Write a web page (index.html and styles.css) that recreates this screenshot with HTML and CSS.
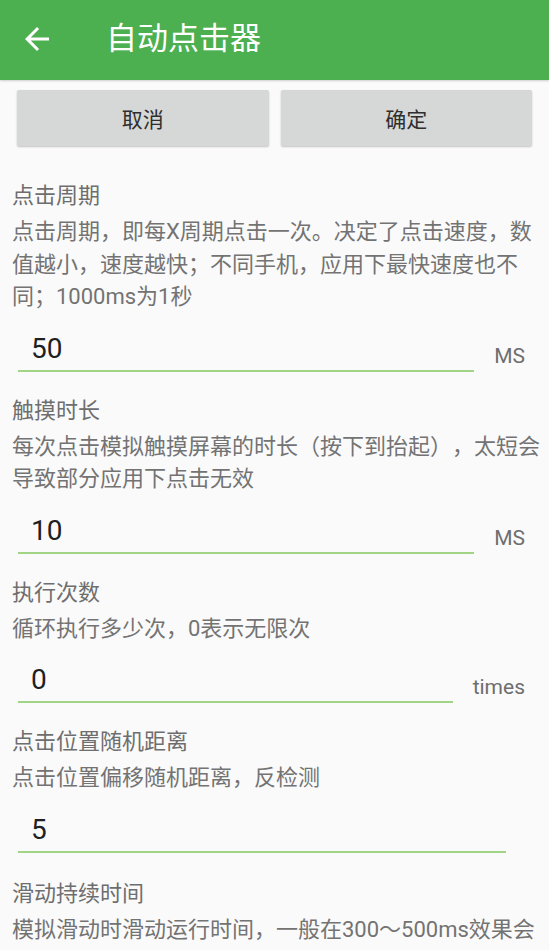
FILE: index.html
```html
<!DOCTYPE html>
<html lang="zh-CN">
<head>
<meta charset="utf-8">
<title>自动点击器</title>
<link rel="stylesheet" href="styles.css">
</head>
<body>
<div class="app">
  <header class="toolbar">
    <svg class="back" viewBox="0 0 24 24" width="36" height="36"><path fill="#fff" d="M20 11H7.83l5.59-5.59L12 4l-8 8 8 8 1.41-1.41L7.83 13H20v-2z"/></svg>
    <h1 class="title">自动点击器</h1>
  </header>
  <div class="actions">
    <button class="btn">取消</button>
    <button class="btn">确定</button>
  </div>
  <main class="content">
    <section class="setting">
      <div class="setting-title">点击周期</div>
      <div class="setting-desc">点击周期，即每X周期点击一次。决定了点击速度，数值越小，速度越快；不同手机，应用下最快速度也不同；1000ms为1秒</div>
      <div class="field-row">
        <div class="field">50</div>
        <div class="unit">MS</div>
      </div>
    </section>
    <section class="setting">
      <div class="setting-title">触摸时长</div>
      <div class="setting-desc">每次点击模拟触摸屏幕的时长（按下到抬起），太短会导致部分应用下点击无效</div>
      <div class="field-row">
        <div class="field">10</div>
        <div class="unit">MS</div>
      </div>
    </section>
    <section class="setting">
      <div class="setting-title">执行次数</div>
      <div class="setting-desc">循环执行多少次，0表示无限次</div>
      <div class="field-row">
        <div class="field">0</div>
        <div class="unit">times</div>
      </div>
    </section>
    <section class="setting">
      <div class="setting-title">点击位置随机距离</div>
      <div class="setting-desc">点击位置偏移随机距离，反检测</div>
      <div class="field-row field-row--plain">
        <div class="field">5</div>
      </div>
    </section>
    <section class="setting setting--last">
      <div class="setting-title">滑动持续时间</div>
      <div class="setting-desc">模拟滑动时滑动运行时间，一般在300～500ms效果会比较好，太短可能无法识别</div>
    </section>
  </main>
</div>
</body>
</html>
```

FILE: styles.css
```css
* { box-sizing: border-box; }
html, body { margin: 0; padding: 0; }
body {
  background: #fafafa;
  font-family: Roboto, "Noto Sans CJK SC", sans-serif;
  width: 549px;
  height: 950px;
  overflow: hidden;
  text-spacing-trim: space-all;
}
.toolbar {
  height: 80px;
  background: #4caf50;
  display: flex;
  align-items: center;
  box-shadow: 0 1px 2px rgba(0,0,0,0.18);
  position: relative;
  z-index: 1;
}
.back {
  margin-left: 19px;
  margin-top: -3px;
  flex: none;
}
.title {
  margin: -3px 0 0 51px;
  font-size: 31px;
  font-weight: 400;
  color: #fff;
  line-height: 36px;
}
.actions {
  display: flex;
  gap: 12px;
  padding: 10px 17px 0 17px;
}
.btn {
  flex: 1;
  height: 56px;
  border: none;
  border-radius: 2px;
  background: #d6d7d7;
  box-shadow: 0 1px 2px rgba(0,0,0,0.22);
  font-family: Roboto, "Noto Sans CJK SC", sans-serif;
  font-size: 21px;
  color: #2e2e2e;
  padding: 0;
}
.content {
  padding: 34px 0 0 12px;
}
.setting + .setting {
  margin-top: 23px;
}
.setting--last {
  margin-top: 25px !important;
}
.setting-title {
  font-size: 22px;
  line-height: 32px;
  color: #6e6e6e;
  margin-bottom: 4px;
}
.setting-desc {
  font-size: 22px;
  line-height: 32.5px;
  color: #737373;
  padding-right: 0;
  text-spacing-trim: space-all;
}
.field-row {
  display: flex;
  align-items: flex-end;
  margin-top: 17px;
  padding-right: 24px;
}
.field-row--plain {
  padding-right: 43px;
}
.field {
  flex: 1;
  margin-left: 6px;
  padding-left: 13px;
  font-size: 28px;
  line-height: 36px;
  color: #1f1f1f;
  padding-bottom: 3px;
  border-bottom: 2px solid #a2d486;
}
.unit {
  margin-left: 20px;
  font-size: 21px;
  line-height: 24px;
  color: #6e6e6e;
  margin-bottom: 4px;
}
```
